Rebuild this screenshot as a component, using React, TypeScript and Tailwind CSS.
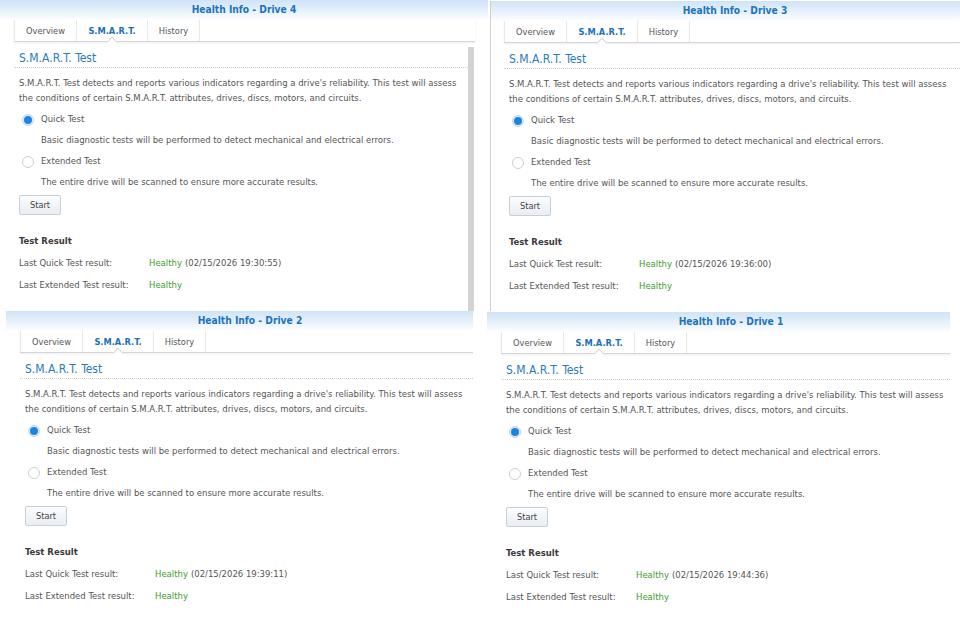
import React from "react";

type Panel = {
  title: string;
  date: string;
  pos: string;
  strip: string;
  scrollbar?: boolean;
};

const panels: Panel[] = [
  {
    title: "Health Info - Drive 4",
    date: "02/15/2026 19:30:55",
    pos: "left-[0px] top-[0px] w-[488px] h-[311px] z-10",
    strip: "ml-[14px] mr-[13px]",
    scrollbar: true,
  },
  {
    title: "Health Info - Drive 3",
    date: "02/15/2026 19:36:00",
    pos: "left-[490px] top-[1px] w-[470px] h-[310px] border-l border-[#cfcfcf] z-10",
    strip: "ml-[13px] mr-[0px]",
  },
  {
    title: "Health Info - Drive 2",
    date: "02/15/2026 19:39:11",
    pos: "left-[6px] top-[311px] w-[467px] h-[306px] z-20",
    strip: "ml-[14px] mr-[0px]",
  },
  {
    title: "Health Info - Drive 1",
    date: "02/15/2026 19:44:36",
    pos: "left-[487px] top-[312px] w-[463px] h-[305px] z-20",
    strip: "ml-[14px] mr-[0px]",
  },
];

const font = "font-['DejaVu_Sans_Condensed','DejaVu_Sans',sans-serif]";

function Radio({ checked }: { checked?: boolean }) {
  return checked ? (
    <span className="ml-[3px] w-[12px] h-[12px] rounded-full border border-[#b8d5ee] bg-[#e3f0fb] flex items-center justify-center shrink-0">
      <span className="w-[8px] h-[8px] rounded-full bg-[#1d83dc]" />
    </span>
  ) : (
    <span className="ml-[3px] w-[12px] h-[12px] rounded-full border border-[#cfcfcf] bg-white shrink-0" />
  );
}

function DrivePanel({ p }: { p: Panel }) {
  return (
    <div className={`absolute ${p.pos} bg-white flex flex-col overflow-hidden`}>
      <div className="h-[19px] bg-gradient-to-b from-[#cfe3f7] to-[#fafcfe] shrink-0">
        <div className="w-[488px] text-center leading-[19px] text-[10.2px] font-bold text-[#1b74bb]">
          {p.title}
        </div>
      </div>
      <div
        className={`${p.strip} h-[23px] shrink-0 flex border-b border-[#d5d5d5] shadow-[0_1px_2px_rgba(0,0,0,0.07)] text-[9.2px]`}
      >
        <div className="w-[63px] mt-[1px] flex items-center justify-center border-l border-r border-[#e8e8e8] text-[#555]">
          Overview
        </div>
        <div className="relative w-[71px] mt-[1px] flex items-center justify-center border-r border-[#e8e8e8] font-bold text-[#1d70b8]">
          S.M.A.R.T.
          <span className="absolute bottom-[-4px] left-1/2 -translate-x-1/2 w-[7px] h-[7px] rotate-45 bg-white border-l border-t border-[#d5d5d5]" />
        </div>
        <div className="w-[52px] mt-[1px] flex items-center justify-center border-r border-[#e8e8e8] text-[#555]">
          History
        </div>
      </div>
      <div className={`${p.strip} flex-1 flex min-h-0`}>
        <div className="flex-1 flex flex-col text-[9.45px] text-[#555]">
          <div className="mt-[7px] h-[19px] pl-[5px] leading-[18px] text-[12px] text-[#2b7bba] border-b border-dotted border-[#cdcdcd]">
            S.M.A.R.T. Test
          </div>
          <div className="pl-[5px] flex flex-col">
            <div className="mt-[7px] leading-[15px] whitespace-nowrap">
              S.M.A.R.T. Test detects and reports various indicators regarding a drive's reliability. This test will assess
              <br />
              the conditions of certain S.M.A.R.T. attributes, drives, discs, motors, and circuits.
            </div>
            <div className="mt-[4px] h-[21px] flex items-center gap-[7px]">
              <Radio checked />
              <span>Quick Test</span>
            </div>
            <div className="h-[21px] flex items-center pl-[22px]">
              Basic diagnostic tests will be performed to detect mechanical and electrical errors.
            </div>
            <div className="h-[21px] flex items-center gap-[7px]">
              <Radio />
              <span>Extended Test</span>
            </div>
            <div className="h-[21px] flex items-center pl-[22px]">
              The entire drive will be scanned to ensure more accurate results.
            </div>
            <div className="mt-[2px]">
              <button className="w-[42px] h-[20px] border border-[#c6d0da] rounded-[2px] bg-gradient-to-b from-[#fbfcfd] to-[#e9eef3] text-[9.2px] text-[#444] leading-none">
                Start
              </button>
            </div>
            <div className="mt-[16px] h-[20px] flex items-center font-bold text-[#3a3a3a]">
              Test Result
            </div>
            <div className="mt-[1px] h-[22px] flex items-center">
              <span className="w-[130px] shrink-0">Last Quick Test result:</span>
              <span className="text-[#3f9a2c]">Healthy</span>
              <span className="ml-[3px]">({p.date})</span>
            </div>
            <div className="h-[22px] flex items-center">
              <span className="w-[130px] shrink-0">Last Extended Test result:</span>
              <span className="text-[#3f9a2c]">Healthy</span>
            </div>
          </div>
        </div>
        {p.scrollbar && (
          <div className="w-[6px] mt-[5px] mr-[1px] bg-[#d3d3d3] shrink-0" />
        )}
      </div>
    </div>
  );
}

export default function App() {
  return (
    <div className={`relative w-[960px] h-[617px] overflow-hidden bg-white ${font}`}>
      {panels.map((p) => (
        <DrivePanel key={p.title} p={p} />
      ))}
    </div>
  );
}
